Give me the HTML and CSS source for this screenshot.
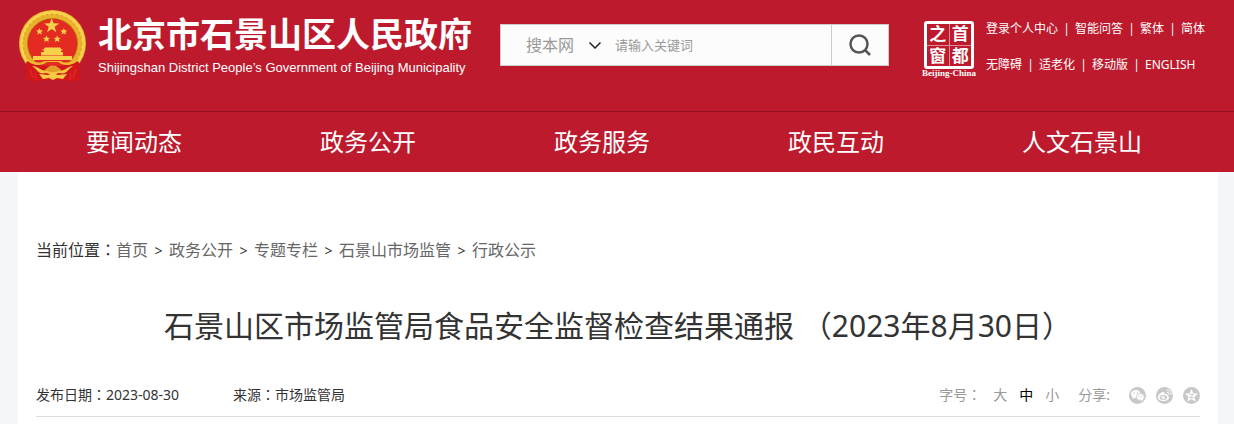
FILE: index.html
```html
<!DOCTYPE html>
<html lang="zh-CN">
<head>
<meta charset="utf-8">
<title>石景山区市场监管局食品安全监督检查结果通报</title>
<link rel="stylesheet" href="styles.css">
</head>
<body>
<header class="site-header">
  <div class="header-top">
    <a class="brand" href="#">
      <svg class="emblem" viewBox="0 0 68 74" aria-hidden="true">
        <circle cx="33.500" cy="33.500" r="33.500" fill="#eab32c"/>
        <circle cx="33.500" cy="33.500" r="31" fill="none" stroke="#f6d24e" stroke-width="3"/>
        <circle cx="33.500" cy="33.500" r="29" fill="none" stroke="#e2a828" stroke-width="2" stroke-dasharray="2 3"/>
        <circle cx="33.500" cy="33.500" r="25.500" fill="#b97c18"/>
        <circle cx="33.500" cy="33.500" r="24.700" fill="#e42b22"/>
        <g fill="#f8d04a">
          <path d="M32.700 8l1.900 5.300 5.600.1-4.500 3.400 1.600 5.400-4.600-3.200-4.600 3.200 1.600-5.400-4.500-3.400 5.600-.1z"/>
          <path d="M20.500 18l1 2.300 2.500.2-1.900 1.600.7 2.500-2.300-1.400-2.300 1.400.7-2.500-1.900-1.600 2.500-.2z"/>
          <path d="M44.800 18l1 2.300 2.500.2-1.900 1.600.7 2.500-2.300-1.400-2.300 1.400.7-2.500-1.900-1.600 2.500-.2z"/>
          <path d="M27.500 25.500l1 2.300 2.500.2-1.900 1.600.7 2.500-2.300-1.400-2.300 1.400.7-2.500-1.900-1.600 2.500-.2z"/>
          <path d="M38.200 25.500l1 2.300 2.500.2-1.900 1.600.7 2.500-2.300-1.400-2.300 1.400.7-2.500-1.900-1.600 2.500-.2z"/>
          <path d="M26 37.500h15l1.500 2h1v1H23.500v-1h1zM25 40.500h17V42H25zM22 42h22v3.500H22zM14 46h39v4H14z"/>
        </g>
        <path d="M8 51C5 57 9 62 7 70C13 70 15 74 20 70C25 72 29 69 34 70C39 69 43 72 48 70C53 74 55 70 61 70C58 62 63 57 59 51C53 54 46 56 34 56C22 56 14 54 8 51Z" fill="#d2171a"/>
        <path d="M10 52C17 57 24 55 28 52H39C43 55 50 57 57 52L58 50C53 52 46 54 42 51H25C21 54 14 52 9 50Z" fill="#edb82f"/>
        <path d="M13 56C20 56 22 62 28 60L31 56H37L40 60C46 62 48 56 54 56C48 60 48 65 40 63L34 65L27 63C19 65 19 60 13 56Z" fill="#f3c53d"/>
        <path d="M28 58q5.500-5 12 0l2 2-5 2h-6l-5-2z" fill="#e0a028"/>
        <path d="M20 64l9 1 5-2 5 2 9-1-4 5-6-1-4 2-4-2-6 1z" fill="#f5cb45"/>
        <path d="M11 59l3 9M16 63l1 7M57 59l-3 9M52 63l-1 7" stroke="#e5302a"/>
      </svg>
      <span class="brand-text">
        <span class="brand-name">北京市石景山区人民政府</span>
        <span class="brand-en">Shijingshan District People’s Government of Beijing Municipality</span>
      </span>
    </a>
    <form class="search">
      <label class="scope">
        <select aria-label="搜索范围"><option>搜本网</option></select>
        <svg viewBox="0 0 12 7" aria-hidden="true"><path d="M.5.5L6 6l5.500-5.500"/></svg>
      </label>
      <input type="text" placeholder="请输入关键词" aria-label="请输入关键词">
      <button type="submit" aria-label="搜索">
        <svg viewBox="0 0 22 22" aria-hidden="true"><circle cx="10" cy="10" r="8.500"/><path d="M16 16l5 5"/></svg>
      </button>
    </form>
    <a class="capital" href="#">
      <span class="seal"><span>之</span><span>首</span><span>窗</span><span>都</span></span>
      <span class="capital-en">Beijing-China</span>
    </a>
    <div class="tools">
      <div class="tool-row"><a href="#">登录个人中心</a><i>|</i><a href="#">智能问答</a><i>|</i><a href="#">繁体</a><i>|</i><a href="#">简体</a></div>
      <div class="tool-row"><a href="#">无障碍</a><i>|</i><a href="#">适老化</a><i>|</i><a href="#">移动版</a><i>|</i><a href="#">ENGLISH</a></div>
    </div>
  </div>
  <nav class="main-nav">
    <a href="#">要闻动态</a>
    <a href="#">政务公开</a>
    <a href="#">政务服务</a>
    <a href="#">政民互动</a>
    <a href="#">人文石景山</a>
  </nav>
</header>
<main class="article">
  <div class="crumbs">当前位置<span class="mark" lang="zh-TW">：</span><a href="#">首页</a><i>&gt;</i><a href="#">政务公开</a><i>&gt;</i><a href="#">专题专栏</a><i>&gt;</i><a href="#">石景山市场监管</a><i>&gt;</i><a href="#">行政公示</a></div>
  <h1>石景山区市场监管局食品安全监督检查结果通报 <span class="mark" lang="zh-TW">（</span>2023年8月30日<span class="mark" lang="zh-TW">）</span></h1>
  <div class="meta">
    <div class="source">
      <span>发布日期<span class="mark" lang="zh-TW">：</span>2023-08-30</span>
      <span>来源<span class="mark" lang="zh-TW">：</span>市场监管局</span>
    </div>
    <div class="options">
      <div class="sizes">
        <span>字号<span class="mark" lang="zh-TW">：</span></span>
        <button type="button">大</button>
        <button type="button" class="current">中</button>
        <button type="button">小</button>
      </div>
      <span>分享:</span>
      <div class="share">
        <a href="#" aria-label="微信"><svg viewBox="0 0 17 17"><circle cx="8.500" cy="8.500" r="8.500" fill="#c8c8c8"/><g fill="#fff"><ellipse cx="6.700" cy="7" rx="4.700" ry="3.900"/><path d="M3.500 9v3l3-1.500z"/></g><ellipse cx="11.300" cy="10" rx="4" ry="3.400" fill="#fff" stroke="#c8c8c8" stroke-width=".8"/><path d="M12 12.500l2 1.500v-2z" fill="#fff"/><g fill="#c8c8c8"><circle cx="5" cy="6" r=".7"/><circle cx="8.300" cy="6" r=".7"/><circle cx="10" cy="9.300" r=".6"/><circle cx="12.700" cy="9.300" r=".6"/></g></svg></a>
        <a href="#" aria-label="微博"><svg viewBox="0 0 17 17"><circle cx="8.500" cy="8.500" r="8.500" fill="#c8c8c8"/><path d="M7.500 5C5 5 2 8 2 10.500C2 13 5 14 7.500 14C10.500 14 13 12.500 13 10.500C13 9.500 12.500 9 11.500 8.700C12 7 11 6.500 8.500 7.200C8.700 6 8.500 5 7.500 5Z" fill="#fff"/><ellipse cx="7.300" cy="10.600" rx="3.700" ry="2.500" fill="#c8c8c8"/><circle cx="7" cy="10.700" r="1.800" fill="#fff"/><circle cx="6.600" cy="11" r=".7" fill="#c8c8c8"/><path d="M10.800 5.200q2.300-.2 2.100 2.400M10.500 3q4.800-.4 4.600 5" fill="none" stroke="#fff"/></svg></a>
        <a href="#" aria-label="QQ空间"><svg viewBox="0 0 17 17"><circle cx="8.500" cy="8.500" r="8.500" fill="#c8c8c8"/><path d="M8.500 2l1.900 4.200 4.600.5-3.400 3.100.9 4.600-4-2.300-4 2.300.9-4.600L2 6.700l4.600-.5z" fill="#fff"/><path d="M6.200 7.200h4.400l-4 3.600h4.600" fill="none" stroke="#c8c8c8"/></svg></a>
      </div>
    </div>
  </div>
</main>
</body>
</html>
```
FILE: styles.css
```css
* { box-sizing: border-box; }
body {
  margin: 0;
  min-height: 100vh;
  display: flex;
  flex-direction: column;
  background: #f4f6f9;
  color: #333;
  font-family: "Noto Sans", "Noto Sans CJK SC", sans-serif;
}
a { color: inherit; text-decoration: none; }
i { font-style: normal; text-align: center; display: inline-block; }
svg { display: block; }
.mark { font-family: "Noto Sans CJK TC", sans-serif; line-height: 1; }

.site-header { background: #bd1a2d; color: #fff; }
.header-top { display: flex; align-items: flex-start; height: 111px; padding: 0 18px 0 19px; }
.brand { display: flex; gap: 11px; padding-top: 10px; flex: none; }
.emblem { width: 68px; height: 74px; }
.brand-text { display: flex; flex-direction: column; }
.brand-name { font-size: 34px; font-weight: 700; line-height: 48px; }
.brand-en { font-family: "Liberation Sans", sans-serif; font-size: 13px; line-height: 20px; }

.search {
  display: flex;
  flex: 0 1 389px;
  min-width: 0;
  height: 42px;
  margin: 24px 32px 0 auto;
  background: #fcfcfc;
  border: 1px solid #ccc;
}
.scope { display: flex; align-items: center; padding-left: 25px; gap: 14px; }
.scope select {
  appearance: none;
  width: 49px;
  padding: 0;
  border: 0;
  background: transparent;
  color: #999;
  font: inherit;
  font-size: 16px;
}
.scope svg { width: 12px; height: 7px; fill: none; stroke: #222; stroke-width: 1.500; }
.search input {
  flex: 1;
  min-width: 0;
  padding: 0 0 0 14px;
  border: 0;
  background: transparent;
  font: inherit;
  font-size: 13px;
}
.search input::placeholder { color: #999; opacity: 1; }
.search button {
  display: grid;
  place-items: center;
  width: 57px;
  padding: 0;
  border: 0;
  border-left: 1px solid #ccc;
  background: transparent;
}
.search button svg { width: 22px; height: 22px; fill: none; stroke: #555; stroke-width: 2.500; }

.capital { display: flex; flex-direction: column; align-items: center; width: 56px; margin-right: 9px; padding-top: 21px; flex: none; }
.seal {
  display: grid;
  grid-template-columns: 1fr 1fr;
  gap: 1px;
  width: 50px;
  height: 48px;
  border: 3px solid #fff;
  border-radius: 3px;
  background: #de8c96;
  font-size: 17px;
  font-weight: 700;
  line-height: 20px;
  text-align: center;
}
.seal span { background: #bd1a2d; }
.capital-en { font-family: "Liberation Serif", serif; font-size: 9px; font-weight: 700; line-height: 9px; }

.tools { padding-top: 11px; font-size: 12px; line-height: 36px; flex: none; min-width: 230px; }
.tool-row { white-space: nowrap; }
.tool-row i { width: 17px; }

.main-nav {
  display: grid;
  grid-template-columns: repeat(4, 1fr) auto;
  padding: 0 92px 0 86px;
  border-top: 1px solid #960f20;
  font-size: 24px;
  line-height: 60px;
}

.article { flex: 1; margin: 0 16px 0 18px; padding: 66px 18px 0; background: #fff; }
.crumbs { font-size: 16px; line-height: 24px; }
.crumbs a { color: #666; }
.crumbs i { width: 21px; font-size: 14px; }
h1 { margin: 41px 0 0; font-size: 30px; font-weight: 400; line-height: 44px; text-align: center; }
.meta {
  display: flex;
  justify-content: space-between;
  margin-top: 37px;
  padding-bottom: 11px;
  border-bottom: 1px solid #ddd;
  font-size: 14px;
  line-height: 20px;
}
.source { display: flex; gap: 54px; }
.options { display: flex; align-items: center; gap: 19px; color: #999; }
.sizes { display: flex; gap: 12px; }
.sizes button { padding: 0; border: 0; background: none; color: inherit; font: inherit; }
.sizes .current { color: #000; }
.share { display: flex; gap: 10px; }
.share svg { width: 17px; height: 17px; }
```
